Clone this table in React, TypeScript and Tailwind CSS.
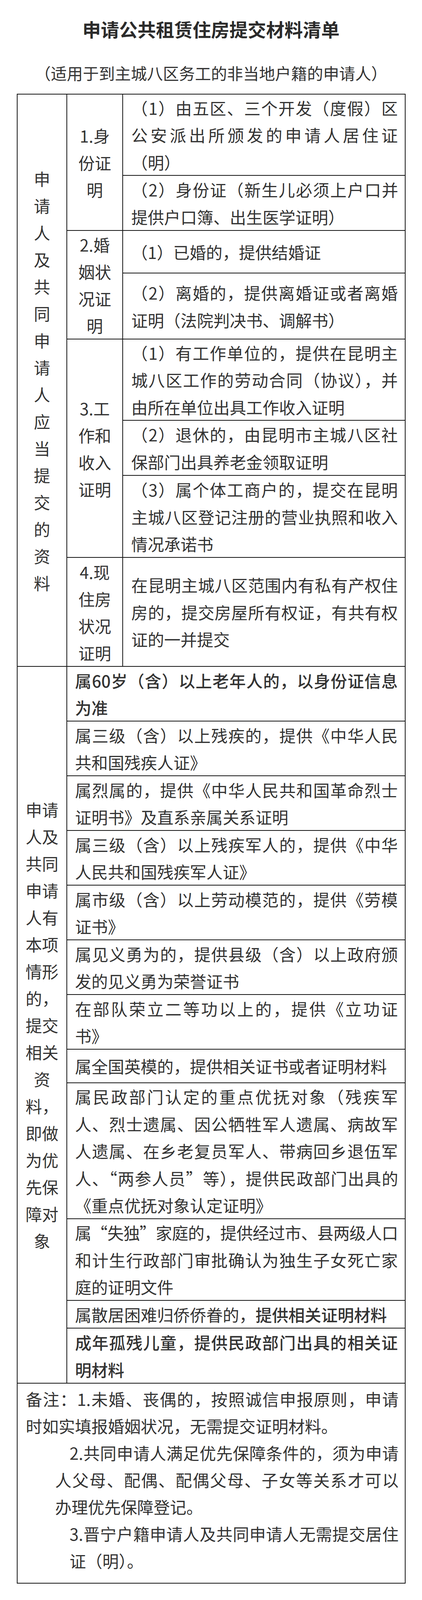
import React from "react";

type Line = { t: React.ReactNode; tight?: boolean };
type Row = { h: string; lines: (string | Line)[]; bold?: boolean };

function Para({ lines, bold }: { lines: (string | Line)[]; bold?: boolean }) {
  return (
    <div className={`w-full ${bold ? "font-medium" : ""}`}>
      {lines.map((l, i) => {
        const o = typeof l === "string" ? { t: l } : l;
        const last = i === lines.length - 1;
        return (
          <div
            key={i}
            className={`${last ? "text-left" : "text-justify [text-align-last:justify]"} ${o.tight ? "tracking-[-1px]" : ""}`}
          >
            {o.t}
          </div>
        );
      })}
    </div>
  );
}

const topGroups: { label: string[]; h: string; items: Row[] }[] = [
  {
    label: ["1.身", "份证", "明"],
    h: "h-[349px] border-b-2",
    items: [
      {
        h: "h-[208px] border-b-2",
        lines: ["（1）由五区、三个开发（度假）区", "公安派出所颁发的申请人居住证", "（明）"],
      },
      {
        h: "flex-1",
        lines: [{ t: "（2）身份证（新生儿必须上户口并", tight: true }, "提供户口簿、出生医学证明）"],
      },
    ],
  },
  {
    label: ["2.婚", "姻状", "况证", "明"],
    h: "h-[278px] border-b-2",
    items: [
      { h: "h-[109px] border-b-2", lines: ["（1）已婚的，提供结婚证"] },
      { h: "flex-1", lines: ["（2）离婚的，提供离婚证或者离婚", "证明（法院判决书、调解书）"] },
    ],
  },
  {
    label: ["3.工", "作和", "收入", "证明"],
    h: "h-[559px] border-b-2",
    items: [
      {
        h: "h-[208px] border-b-2",
        lines: ["（1）有工作单位的，提供在昆明主", "城八区工作的劳动合同（协议），并", "由所在单位出具工作收入证明"],
      },
      { h: "h-[141px] border-b-2", lines: ["（2）退休的，由昆明市主城八区社", "保部门出具养老金领取证明"] },
      {
        h: "flex-1",
        lines: ["（3）属个体工商户的，提交在昆明", "主城八区登记注册的营业执照和收入", "情况承诺书"],
      },
    ],
  },
  {
    label: ["4.现", "住房", "状况", "证明"],
    h: "flex-1",
    items: [
      {
        h: "flex-1",
        lines: ["在昆明主城八区范围内有私有产权住", "房的，提交房屋所有权证，有共有权", "证的一并提交"],
      },
    ],
  },
];

const bottomRows: Row[] = [
  { h: "h-[140px] border-b-2", bold: true, lines: ["属60岁（含）以上老年人的，以身份证信息", "为准"] },
  { h: "h-[140px] border-b-2", lines: ["属三级（含）以上残疾的，提供《中华人民", "共和国残疾人证》"] },
  { h: "h-[140px] border-b-2", lines: ["属烈属的，提供《中华人民共和国革命烈士", "证明书》及直系亲属关系证明"] },
  { h: "h-[140px] border-b-2", lines: ["属三级（含）以上残疾军人的，提供《中华", "人民共和国残疾军人证》"] },
  { h: "h-[140px] border-b-2", lines: ["属市级（含）以上劳动模范的，提供《劳模", "证书》"] },
  { h: "h-[140px] border-b-2", lines: ["属见义勇为的，提供县级（含）以上政府颁", "发的见义勇为荣誉证书"] },
  { h: "h-[140px] border-b-2", lines: ["在部队荣立二等功以上的，提供《立功证", "书》"] },
  { h: "h-[87px] border-b-2", lines: ["属全国英模的，提供相关证书或者证明材料"] },
  {
    h: "h-[348px] border-b-2",
    lines: [
      "属民政部门认定的重点优抚对象（残疾军",
      "人、烈士遗属、因公牺牲军人遗属、病故军",
      "人遗属、在乡老复员军人、带病回乡退伍军",
      { t: "人、“两参人员”等），提供民政部门出具的", tight: true },
      "《重点优抚对象认定证明》",
    ],
  },
  {
    h: "h-[209px] border-b-2",
    lines: [
      { t: "属“失独”家庭的，提供经过市、县两级人口", tight: true },
      "和计生行政部门审批确认为独生子女死亡家",
      "庭的证明文件",
    ],
  },
  {
    h: "h-[71px] border-b-2",
    lines: [
      {
        t: (
          <>
            属散居困难归侨侨眷的，<span className="font-medium">提供相关证明材料</span>
          </>
        ),
      },
    ],
  },
  { h: "flex-1", bold: true, lines: ["成年孤残儿童，提供民政部门出具的相关证", "明材料"] },
];

const leftTop = "申请人及共同申请人应当提交的资料".split("");
const leftBottom = ["申请", "人及", "共同", "申请", "人有", "本项", "情形", "的，", "提交", "相关", "资", "料，", "即做", "为优", "先保", "障对", "象"];

export default function App() {
  return (
    <div className="w-full bg-white pb-[36px] text-[#333] font-['Noto_Sans_CJK_SC','Noto_Sans',sans-serif]">
      <div className="flex h-[102px] items-end justify-center text-[47px] font-bold leading-[56px] text-[#2b2b2b]">
        申请公共租赁住房提交材料清单
      </div>
      <div className="mt-[56px] flex h-[56px] items-center justify-center text-[41px] leading-[56px]">
        （适用于到主城八区务工的非当地户籍的申请人）
      </div>

      <div className="ml-[43px] mt-[26px] w-[995px] border-2 border-[#151515] text-[42px]">
        {/* 必须提交的资料 */}
        <div className="flex h-[1465px] border-b-2 border-[#151515]">
          <div className="flex w-[127px] shrink-0 flex-col items-center justify-center border-r-2 border-[#151515] leading-[69px]">
            {leftTop.map((c, i) => (
              <div key={i}>{c}</div>
            ))}
          </div>
          <div className="flex flex-1 flex-col">
            {topGroups.map((g, gi) => (
              <div key={gi} className={`flex border-[#151515] ${g.h}`}>
                <div className="flex w-[143px] shrink-0 flex-col items-center justify-center border-r-2 border-[#151515] text-center leading-[69px]">
                  {g.label.map((s, i) => (
                    <div key={i}>{s}</div>
                  ))}
                </div>
                <div className="flex flex-1 flex-col">
                  {g.items.map((it, ii) => (
                    <div key={ii} className={`flex items-center border-[#151515] pl-[21px] pr-[18px] leading-[69.5px] ${it.h}`}>
                      <Para lines={it.lines} bold={it.bold} />
                    </div>
                  ))}
                </div>
              </div>
            ))}
          </div>
        </div>

        {/* 优先保障 */}
        <div className="flex h-[1835px] border-b-2 border-[#151515]">
          <div className="flex w-[127px] shrink-0 flex-col items-center justify-center border-r-2 border-[#151515] leading-[69px]">
            {leftBottom.map((c, i) => (
              <div key={i}>{c}</div>
            ))}
          </div>
          <div className="flex flex-1 flex-col">
            {bottomRows.map((r, i) => (
              <div key={i} className={`flex items-center border-[#151515] pl-[20px] pr-[18px] leading-[69.5px] ${r.h}`}>
                <Para lines={r.lines} bold={r.bold} />
              </div>
            ))}
          </div>
        </div>

        {/* 备注 */}
        <div className="h-[510px] pl-[21px] pr-[16px] pt-[4px] leading-[69px]">
          <div className="text-justify [text-align-last:justify]">备注：1.未婚、丧偶的，按照诚信申报原则，申请</div>
          <div>时如实填报婚姻状况，无需提交证明材料。</div>
          <div className="ml-[112px] text-justify [text-align-last:justify]">2.共同申请人满足优先保障条件的，须为申请</div>
          <div className="ml-[75px] text-justify [text-align-last:justify]">人父母、配偶、配偶父母、子女等关系才可以</div>
          <div className="ml-[75px]">办理优先保障登记。</div>
          <div className="ml-[112px] text-justify [text-align-last:justify]">3.晋宁户籍申请人及共同申请人无需提交居住</div>
          <div className="ml-[112px]">证（明）。</div>
        </div>
      </div>
    </div>
  );
}
